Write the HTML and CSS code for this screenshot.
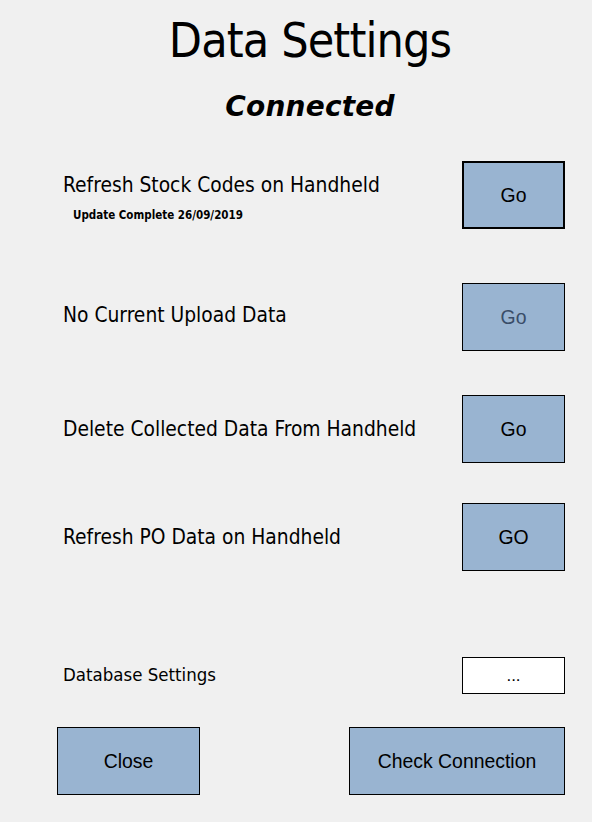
FILE: index.html
```html
<!DOCTYPE html>
<html>
<head>
<meta charset="utf-8">
<link rel="stylesheet" href="styles.css">
</head>
<body>
<div class="form">
  <header class="head">
    <h1 class="title">Data Settings</h1>
    <div class="status">Connected</div>
  </header>

  <div class="row row-first">
    <div class="label-group">
      <div class="label">Refresh Stock Codes on Handheld</div>
      <div class="sublabel">Update Complete 26/09/2019</div>
    </div>
    <button class="btn btn-go btn-default">Go</button>
  </div>

  <div class="row row-2">
    <div class="label">No Current Upload Data</div>
    <button class="btn btn-go btn-disabled">Go</button>
  </div>

  <div class="row row-3">
    <div class="label">Delete Collected Data From Handheld</div>
    <button class="btn btn-go">Go</button>
  </div>

  <div class="row row-4">
    <div class="label">Refresh PO Data on Handheld</div>
    <button class="btn btn-go">GO</button>
  </div>

  <div class="row row-db">
    <div class="label label-small">Database Settings</div>
    <button class="btn btn-dots">...</button>
  </div>

  <div class="footer">
    <button class="btn btn-close">Close</button>
    <button class="btn btn-check">Check Connection</button>
  </div>
</div>
</body>
</html>
```

FILE: styles.css
```css
html, body {
  margin: 0;
  padding: 0;
  background: #f0f0f0;
}

.form {
  width: 592px;
  height: 822px;
  box-sizing: border-box;
  padding: 0 27px 0 63px;
  display: flex;
  flex-direction: column;
  font-family: "DejaVu Sans Condensed", "DejaVu Sans", sans-serif;
  color: #000;
}

.head {
  display: flex;
  flex-direction: column;
  align-items: center;
  margin-left: -8px;
}

.title {
  margin: 10px 0 0 0;
  font-size: 48px;
  font-weight: normal;
  line-height: 60px;
  letter-spacing: -0.9px;
}

.status {
  margin-top: 20px;
  font-family: "DejaVu Sans", sans-serif;
  font-size: 28px;
  font-weight: bold;
  font-style: italic;
  line-height: 34px;
  letter-spacing: 0.2px;
}

.row {
  display: flex;
  justify-content: space-between;
  align-items: center;
}

.row-first {
  align-items: flex-start;
  margin-top: 37px;
}

.row-first .label-group {
  padding-top: 12px;
}

.row-2 { margin-top: 54px; }
.row-3 { margin-top: 44px; }
.row-4 { margin-top: 40px; }
.row-db { margin-top: 86px; }

.row-2 .label { margin-top: -3px; }
.row-db .label { margin-top: -3px; }

.label {
  font-size: 20.8px;
  line-height: 25px;
}

.label-small {
  font-size: 18.5px;
}

.sublabel {
  margin: 10px 0 0 10px;
  font-size: 11.5px;
  font-weight: bold;
  line-height: 14px;
}

.btn {
  box-sizing: border-box;
  margin: 0;
  padding: 0;
  background: #99b4d1;
  border: 1px solid #000;
  border-radius: 0;
  font-family: "Liberation Sans", Arial, sans-serif;
  font-size: 19.4px;
  color: #000;
}

.btn-go {
  width: 103px;
  height: 68px;
}

.btn-default {
  border-width: 2px;
}

.btn-disabled {
  color: #3a4d68;
}

.btn-dots {
  width: 103px;
  height: 37px;
  background: #fff;
  font-size: 17px;
}

.footer {
  display: flex;
  justify-content: space-between;
  margin-top: 33px;
  margin-left: -6px;
}

.btn-close {
  width: 143px;
  height: 68px;
}

.btn-check {
  width: 216px;
  height: 68px;
}
```
